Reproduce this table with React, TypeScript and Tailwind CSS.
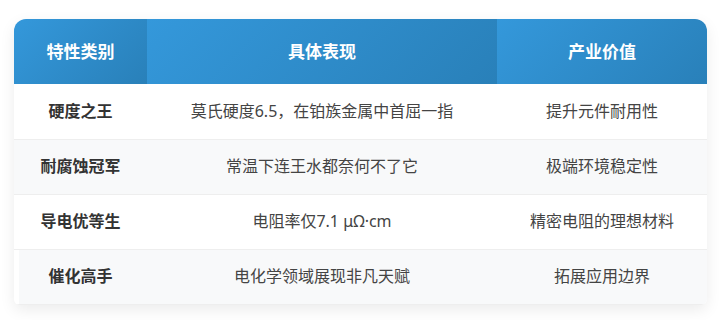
const HEAD = ["特性类别", "具体表现", "产业价值"];

const ROWS = [
  ["硬度之王", "莫氏硬度6.5，在铂族金属中首屈一指", "提升元件耐用性"],
  ["耐腐蚀冠军", "常温下连王水都奈何不了它", "极端环境稳定性"],
  ["导电优等生", "电阻率仅7.1 μΩ·cm", "精密电阻的理想材料"],
  ["催化高手", "电化学领域展现非凡天赋", "拓展应用边界"],
];

const WIDTHS = ["w-[133px]", "w-[350px]", "w-[210px]"];

export default function App() {
  return (
    <div className="min-h-[320px] w-[719px] bg-white pt-[19px] pl-[14px] font-['Noto_Sans','Noto_Sans_CJK_SC',sans-serif]">
      <div className="w-[693px] overflow-hidden rounded-t-xl rounded-b-md shadow-[0_5px_15px_rgba(0,0,0,0.08)]">
        <table className="w-full table-fixed border-collapse">
          <thead>
            <tr>
              {HEAD.map((h, i) => (
                <th
                  key={h}
                  className={`${WIDTHS[i]} h-[65px] bg-[linear-gradient(135deg,#3498db,#2980b9)] text-center text-[17px] font-bold leading-[25px] text-white`}
                >
                  {h}
                </th>
              ))}
            </tr>
          </thead>
          <tbody>
            {ROWS.map((row, r) => {
              const last = r === ROWS.length - 1;
              const bg = r % 2 === 1 ? "bg-[#f8f9fa]" : "bg-white";
              return (
                <tr key={row[0]} className="border-b border-[#eeeeee]">
                  {row.map((cell, c) => (
                    <td
                      key={c}
                      className={`h-[55px] text-center text-[16px] leading-[21px] ${
                        c === 0 ? "font-bold text-[#333333]" : "text-[#444444]"
                      } ${
                        last && c === 0
                          ? "bg-[linear-gradient(to_right,#ffffff_5px,#f8f9fa_5px)]"
                          : bg
                      }`}
                    >
                      {cell}
                    </td>
                  ))}
                </tr>
              );
            })}
          </tbody>
        </table>
      </div>
    </div>
  );
}
